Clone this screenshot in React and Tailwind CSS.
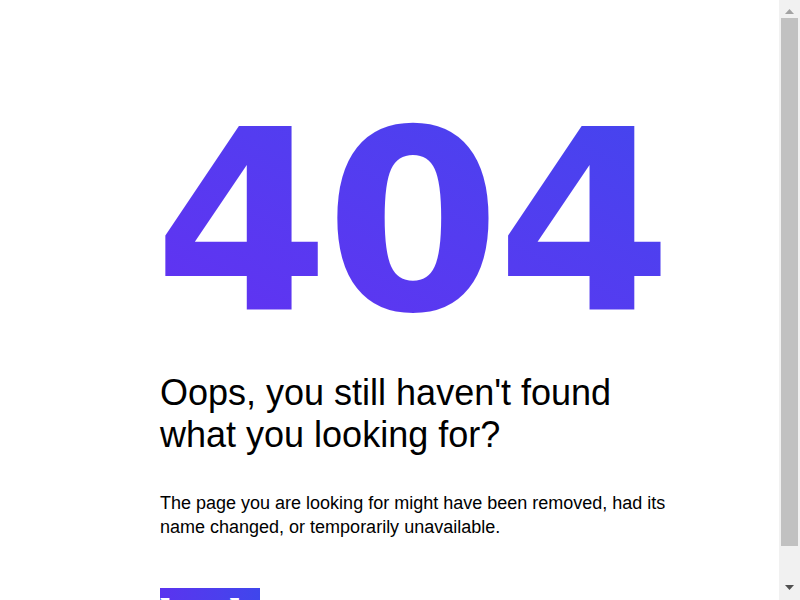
function FakeScrollbar() {
  return (
    <div className="fixed right-0 top-0 h-[600px] w-[21px] bg-[#f1f1f1]">
      <svg className="absolute left-[6px] top-[9px]" width="9" height="5" viewBox="0 0 9 5">
        <path d="M4.5 0 L9 5 L0 5 Z" fill="#a3a3a3" />
      </svg>
      <div className="absolute left-[2px] right-[2px] top-[18px] h-[528px] bg-[#c1c1c1]" />
      <svg className="absolute left-[6px] top-[585px]" width="9" height="5" viewBox="0 0 9 5">
        <path d="M0 0 L9 0 L4.5 5 Z" fill="#505050" />
      </svg>
    </div>
  );
}

export default function App() {
  return (
    <div className="min-h-[643px] bg-white">
      <div className="pl-[160px] pt-[96px] pb-[20px]">
        <div className="w-[520px]">
          <h1 className="block w-fit -ml-[6px] bg-linear-to-tr from-[#6330f2] to-[#4345ee] bg-clip-text text-[252px] font-bold leading-none tracking-[-4px] text-transparent [font-family:'DejaVu_Sans',sans-serif]">
            404
          </h1>
          <h2 className="mt-[24px] text-[36px] leading-[42px] text-black [font-family:'Liberation_Sans',Arial,sans-serif]">
            Oops, you still haven't found
            <br />
            what you looking for?
          </h2>
          <p className="mt-[35px] w-[510px] text-[18px] leading-6 text-black [font-family:'Liberation_Sans',Arial,sans-serif]">
            The page you are looking for might have been removed, had its name changed, or temporarily unavailable.
          </p>
          <button className="mt-[49px] block w-[100px] bg-linear-to-r from-[#5a33ef] to-[#3f46ec] pt-[4px] text-left text-[46px] font-bold leading-none text-white [font-family:'Liberation_Serif',serif]">
            back
          </button>
        </div>
      </div>
      <FakeScrollbar />
    </div>
  );
}
